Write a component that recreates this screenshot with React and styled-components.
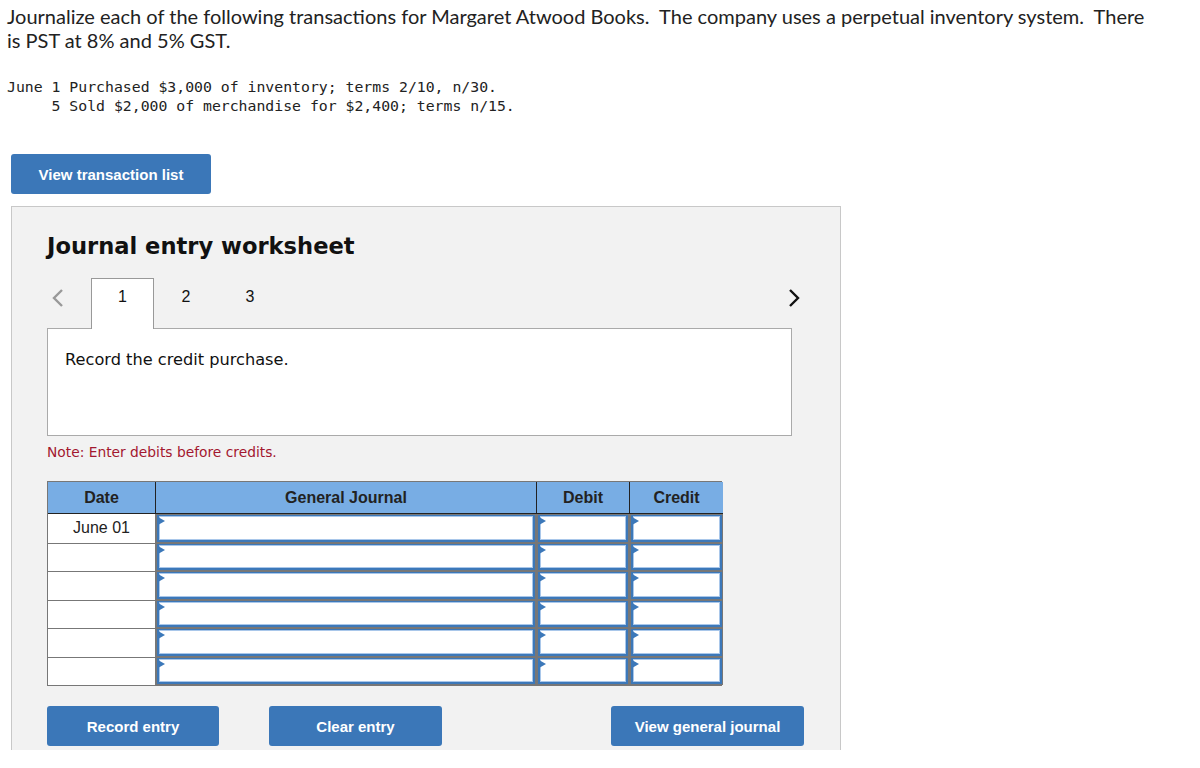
import React from 'react';
import styled, { createGlobalStyle } from 'styled-components';

const GlobalStyle = createGlobalStyle`
  body {
    margin: 0;
    background: #fff;
    font-family: 'Liberation Sans', Arial, sans-serif;
    color: #222;
  }
`;

const Page = styled.div`
  padding: 4px 0 0 7px;
  width: 1160px;
`;

const Intro = styled.p`
  margin: 0;
  font-family: Lato, 'Open Sans', sans-serif;
  font-size: 20px;
  line-height: 24px;
  color: #222;
  width: 1155px;
`;

const Transactions = styled.pre`
  margin: 25px 0 0;
  font-family: 'DejaVu Sans Mono', 'Liberation Mono', monospace;
  font-size: 14.8px;
  line-height: 19px;
  color: #222;
`;

const BlueButton = styled.button`
  display: flex;
  align-items: center;
  justify-content: center;
  width: ${p => p.$w}px;
  height: 40px;
  border: none;
  border-radius: 3px;
  background: #3b77b8;
  color: #fff;
  font-family: 'Liberation Sans', Arial, sans-serif;
  font-weight: bold;
  font-size: 15px;
  cursor: pointer;
`;

const TopButton = styled(BlueButton)`
  margin: 39px 0 0 4px;
`;

const Panel = styled.div`
  margin: 12px 0 0 4px;
  width: 830px;
  height: 544px;
  background: #f2f2f2;
  border: 1px solid #c8c8c8;
  border-bottom: none;
  padding: 0 0 0 35px;
  box-sizing: border-box;
`;

const Title = styled.h2`
  margin: 0;
  padding-top: 23px;
  font-family: 'DejaVu Sans', Verdana, sans-serif;
  font-weight: bold;
  font-size: 22.6px;
  line-height: 32px;
  color: #111;
`;

const TabBar = styled.div`
  display: flex;
  align-items: stretch;
  margin-top: 16px;
  width: 754px;
  height: 51px;
  position: relative;
  z-index: 1;
`;

const Arrow = styled.div`
  width: ${p => p.$w}px;
  display: flex;
  align-items: center;
  justify-content: ${p => p.$right ? 'flex-end' : 'flex-start'};
  padding: 0 0 12px ${p => p.$right ? '0' : '4px'};
  box-sizing: border-box;
  margin-left: ${p => p.$right ? 'auto' : '0'};
`;

const Tab = styled.div`
  width: ${p => p.$active ? 63 : 64}px;
  display: flex;
  justify-content: center;
  padding-top: 9px;
  box-sizing: border-box;
  font-family: 'Liberation Sans', Arial, sans-serif;
  font-size: 16px;
  color: #111;
  background: ${p => p.$active ? '#fff' : 'transparent'};
  border: 1px solid ${p => p.$active ? '#999' : 'transparent'};
  border-bottom: none;
`;

const Prompt = styled.div`
  width: 745px;
  height: 108px;
  margin-top: -1px;
  background: #fff;
  border: 1px solid #aaa;
  box-sizing: border-box;
  padding: 20px 17px;
  font-family: 'DejaVu Sans', Verdana, sans-serif;
  font-size: 16.2px;
  line-height: 22px;
  color: #111;
`;

const Note = styled.div`
  margin-top: 7px;
  font-family: 'DejaVu Sans', Verdana, sans-serif;
  font-size: 13.8px;
  line-height: 18px;
  color: #a3172f;
`;

const Grid = styled.div`
  margin-top: 20px;
  display: grid;
  grid-template-columns: 107px 381px 93px 94px;
  grid-template-rows: 32px repeat(6, 28.5px);
  width: 675px;
  border: 1px solid #777;
  box-sizing: border-box;
`;

const Head = styled.div`
  background: #78ade4;
  display: flex;
  align-items: center;
  justify-content: center;
  font-family: 'Liberation Sans', Arial, sans-serif;
  font-weight: bold;
  font-size: 16px;
  color: #222;
  border-bottom: 1px solid #222;
  border-left: ${p => p.$first ? 'none' : '1px solid #222'};
`;

const DateCell = styled.div`
  background: #fff;
  display: flex;
  align-items: center;
  justify-content: center;
  font-family: 'Liberation Sans', Arial, sans-serif;
  font-size: 16px;
  color: #222;
  border-top: ${p => p.$top ? 'none' : '1px solid #777'};
`;

const InputCell = styled.div`
  background: #777;
  padding: 1px 1px 1px 2px;
  display: flex;
`;

const Field = styled.div`
  position: relative;
  flex: 1;
  background: #fff;
  border: 2px solid #3c78b9;
  border-top-width: 1px;
  box-shadow: inset 0 0 0 1px #a9c7ea;
`;

const Flag = styled.span`
  position: absolute;
  left: -1px;
  top: 1px;
  width: 0;
  height: 0;
  border-top: 4px solid transparent;
  border-bottom: 4px solid transparent;
  border-left: 7px solid #3c78b9;
`;

const Actions = styled.div`
  display: flex;
  gap: 50px;
  margin-top: 20px;
  width: 757px;
`;

const Spacer = styled.div`
  flex: 1;
`;

const Chevron = ({ left, color }) => (
  <svg width="13" height="20" viewBox="0 0 13 20">
    <path d={left ? 'M11 2 L3 10 L11 18' : 'M2 2 L10 10 L2 18'} fill="none" stroke={color} strokeWidth="2.4" />
  </svg>
);

const rows = ['June 01', '', '', '', '', ''];

export default function App() {
  return (
    <Page>
      <GlobalStyle />
      <Intro>
        Journalize each of the following transactions for Margaret Atwood Books.&nbsp; The company uses a perpetual inventory system.&nbsp; There is PST at 8% and 5% GST.
      </Intro>
      <Transactions>{`June 1 Purchased $3,000 of inventory; terms 2/10, n/30.
     5 Sold $2,000 of merchandise for $2,400; terms n/15.`}</Transactions>
      <TopButton $w={200}>View transaction list</TopButton>
      <Panel>
        <Title>Journal entry worksheet</Title>
        <TabBar>
          <Arrow $w={44}><Chevron left color="#999" /></Arrow>
          <Tab $active>1</Tab>
          <Tab>2</Tab>
          <Tab>3</Tab>
          <Arrow $w={60} $right><Chevron color="#111" /></Arrow>
        </TabBar>
        <Prompt>Record the credit purchase.</Prompt>
        <Note>Note: Enter debits before credits.</Note>
        <Grid>
          <Head $first>Date</Head>
          <Head>General Journal</Head>
          <Head>Debit</Head>
          <Head>Credit</Head>
          {rows.map((d, i) => (
            <React.Fragment key={i}>
              <DateCell $top={i === 0}>{d}</DateCell>
              <InputCell><Field><Flag /></Field></InputCell>
              <InputCell><Field><Flag /></Field></InputCell>
              <InputCell><Field><Flag /></Field></InputCell>
            </React.Fragment>
          ))}
        </Grid>
        <Actions>
          <BlueButton $w={172}>Record entry</BlueButton>
          <BlueButton $w={173}>Clear entry</BlueButton>
          <Spacer />
          <BlueButton $w={193}>View general journal</BlueButton>
        </Actions>
      </Panel>
    </Page>
  );
}
